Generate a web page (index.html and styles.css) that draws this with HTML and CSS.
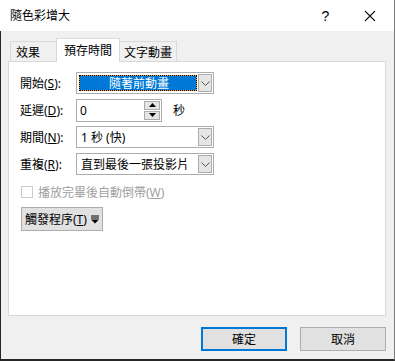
FILE: index.html
```html
<!DOCTYPE html>
<html lang="zh-Hant">
<head>
    <meta charset="UTF-8">
    <title>隨色彩增大</title>
    <link rel="stylesheet" href="styles.css">
</head>
<body>
    <div class="window">
        <div class="titlebar">
            <span class="title">隨色彩增大</span>
            <span class="title-btn help">?</span>
            <span class="title-btn close">
                <svg width="12" height="12" viewBox="0 0 12 12"><path d="M1 1 L11 11 M11 1 L1 11" stroke="#111" stroke-width="1.1" fill="none"/></svg>
            </span>
        </div>

        <div class="body">
            <div class="tabs">
                <div class="tab">效果</div>
                <div class="tab active">預存時間</div>
                <div class="tab">文字動畫</div>
            </div>

            <div class="panel">
                <div class="row">
                    <label class="label">開始(<u>S</u>):</label>
                    <div class="combo">
                        <div class="combo-value selected"><span>隨著前動畫</span></div>
                        <div class="combo-arrow">
                            <svg width="9" height="5" viewBox="0 0 9 5"><path d="M0.5 0.5 L4.5 4.5 L8.5 0.5" stroke="#555" fill="none"/></svg>
                        </div>
                    </div>
                </div>

                <div class="row">
                    <label class="label">延遲(<u>D</u>):</label>
                    <div class="spin">
                        <div class="spin-value">0</div>
                        <div class="spin-btns">
                            <div class="spin-btn"><svg width="7" height="4" viewBox="0 0 7 4"><path d="M0 4 L3.5 0 L7 4 Z" fill="#000"/></svg></div>
                            <div class="spin-btn"><svg width="7" height="4" viewBox="0 0 7 4"><path d="M0 0 L3.5 4 L7 0 Z" fill="#000"/></svg></div>
                        </div>
                    </div>
                    <span class="unit">秒</span>
                </div>

                <div class="row">
                    <label class="label">期間(<u>N</u>):</label>
                    <div class="combo">
                        <div class="combo-value">1 秒 (快)</div>
                        <div class="combo-arrow">
                            <svg width="9" height="5" viewBox="0 0 9 5"><path d="M0.5 0.5 L4.5 4.5 L8.5 0.5" stroke="#555" fill="none"/></svg>
                        </div>
                    </div>
                </div>

                <div class="row">
                    <label class="label">重複(<u>R</u>):</label>
                    <div class="combo">
                        <div class="combo-value">直到最後一張投影片</div>
                        <div class="combo-arrow">
                            <svg width="9" height="5" viewBox="0 0 9 5"><path d="M0.5 0.5 L4.5 4.5 L8.5 0.5" stroke="#555" fill="none"/></svg>
                        </div>
                    </div>
                </div>

                <div class="check-row">
                    <span class="checkbox"></span>
                    <span class="check-label">播放完畢後自動倒帶(<u>W</u>)</span>
                </div>

                <div class="trigger">
                    <span>觸發程序(<u>T</u>)</span>
                    <svg width="8" height="9" viewBox="0 0 8 9"><path d="M0 1 H8 M0 3 H8" stroke="#000" stroke-width="1.2"/><path d="M0 4.5 L8 4.5 L4 8.5 Z" fill="#000"/></svg>
                </div>
            </div>

            <div class="footer">
                <div class="btn default">確定</div>
                <div class="btn">取消</div>
            </div>
        </div>
    </div>
</body>
</html>
```

FILE: styles.css
```css
* {
    margin: 0;
    padding: 0;
    box-sizing: border-box;
}

body {
    font-family: "Noto Sans", "Noto Sans CJK TC", sans-serif;
    font-size: 12px;
    color: #000;
    background: #f0f0f0;
    width: 395px;
    height: 361px;
    overflow: hidden;
    white-space: nowrap;
}

.window {
    width: 395px;
    height: 361px;
    display: flex;
    flex-direction: column;
}

/* Title bar */
.titlebar {
    height: 31px;
    background: #fff;
    display: flex;
    align-items: center;
    padding-left: 10px;
    border-right: 1px solid #7a7a7a;
}

.title {
    flex: 1;
    font-size: 12px;
    line-height: 1;
}

.title-btn {
    display: flex;
    align-items: center;
    justify-content: center;
    height: 31px;
}

.help {
    width: 46px;
    font-family: "Liberation Sans", sans-serif;
    font-size: 14px;
    padding-left: 3px;
}

.close {
    width: 46px;
    margin-right: 1px;
}

/* Dialog body */
.body {
    flex: 1;
    display: flex;
    flex-direction: column;
    background: #f0f0f0;
    border-left: 1px solid #262626;
    border-right: 1px solid #7a7a7a;
    border-bottom: 2px solid #262626;
    padding: 8px 8px 0 7px;
}

.tabs {
    display: flex;
    align-items: flex-end;
    height: 22px;
    padding-left: 2px;
    position: relative;
    z-index: 1;
}

.tab {
    height: 20px;
    border: 1px solid #d9d9d9;
    border-bottom: none;
    background: #f0f0f0;
    display: flex;
    align-items: center;
    justify-content: center;
}

.tab:first-child {
    width: 47px;
    justify-content: flex-start;
    padding-left: 5px;
}

.tab.active {
    height: 24px;
    width: 64px;
    background: #fff;
    margin-bottom: -1px;
    margin-left: -1px;
    margin-right: -1px;
    padding-bottom: 2px;
}

.tab:last-child {
    width: 58px;
}

.panel {
    height: 255px;
    background: #fff;
    border: 1px solid #d9d9d9;
    padding: 10px 11px 0 11px;
    display: flex;
    flex-direction: column;
    gap: 5px;
}

.row {
    display: flex;
    align-items: center;
    height: 22px;
}

.label {
    width: 56px;
    flex-shrink: 0;
}

/* Combo box */
.combo {
    width: 138px;
    height: 22px;
    border: 1px solid #acacac;
    background: #fff;
    display: flex;
    padding: 2px 1px 2px 2px;
    gap: 1px;
}

.combo-value {
    flex: 1;
    display: flex;
    align-items: center;
    padding-left: 2px;
}

.combo-value.selected {
    background: #0078d7;
    color: #fff;
    justify-content: center;
    outline: 1px dotted #000;
    outline-offset: -1px;
    box-shadow: inset 0 0 0 1px #f7a43b;
}

.combo-arrow {
    width: 14px;
    margin: -1px 0;
    background: #e5e5e5;
    border: 1px solid #acacac;
    display: flex;
    align-items: center;
    justify-content: center;
}

/* Spin box */
.spin {
    width: 86px;
    height: 23px;
    border: 1px solid #acacac;
    display: flex;
    padding: 1px;
}

.spin-value {
    flex: 1;
    display: flex;
    align-items: center;
    padding-left: 2px;
}

.spin-btns {
    width: 16px;
    display: flex;
    flex-direction: column;
    gap: 1px;
}

.spin-btn {
    flex: 1;
    background: #e5e5e5;
    border: 1px solid #acacac;
    display: flex;
    align-items: center;
    justify-content: center;
}

.unit {
    margin-left: 11px;
}

/* Checkbox */
.check-row {
    display: flex;
    align-items: center;
    height: 18px;
    margin-top: 3px;
    padding-left: 1px;
}

.checkbox {
    width: 12px;
    height: 12px;
    border: 1px solid #cccccc;
    background: #fff;
    margin-right: 5px;
}

.check-label {
    color: #a0a0a0;
}

/* Trigger button */
.trigger {
    width: 82px;
    height: 24px;
    margin-top: 1px;
    margin-left: 1px;
    background: #e1e1e1;
    border: 1px solid #adadad;
    display: flex;
    align-items: center;
    gap: 4px;
    padding: 0 0 0 3px;
}

/* Footer buttons */
.footer {
    display: flex;
    justify-content: flex-end;
    gap: 13px;
    padding-top: 11px;
}

.btn {
    width: 86px;
    height: 24px;
    background: #e1e1e1;
    border: 1px solid #adadad;
    display: flex;
    align-items: center;
    justify-content: center;
}

.btn.default {
    border: 2px solid #0078d7;
}
```
